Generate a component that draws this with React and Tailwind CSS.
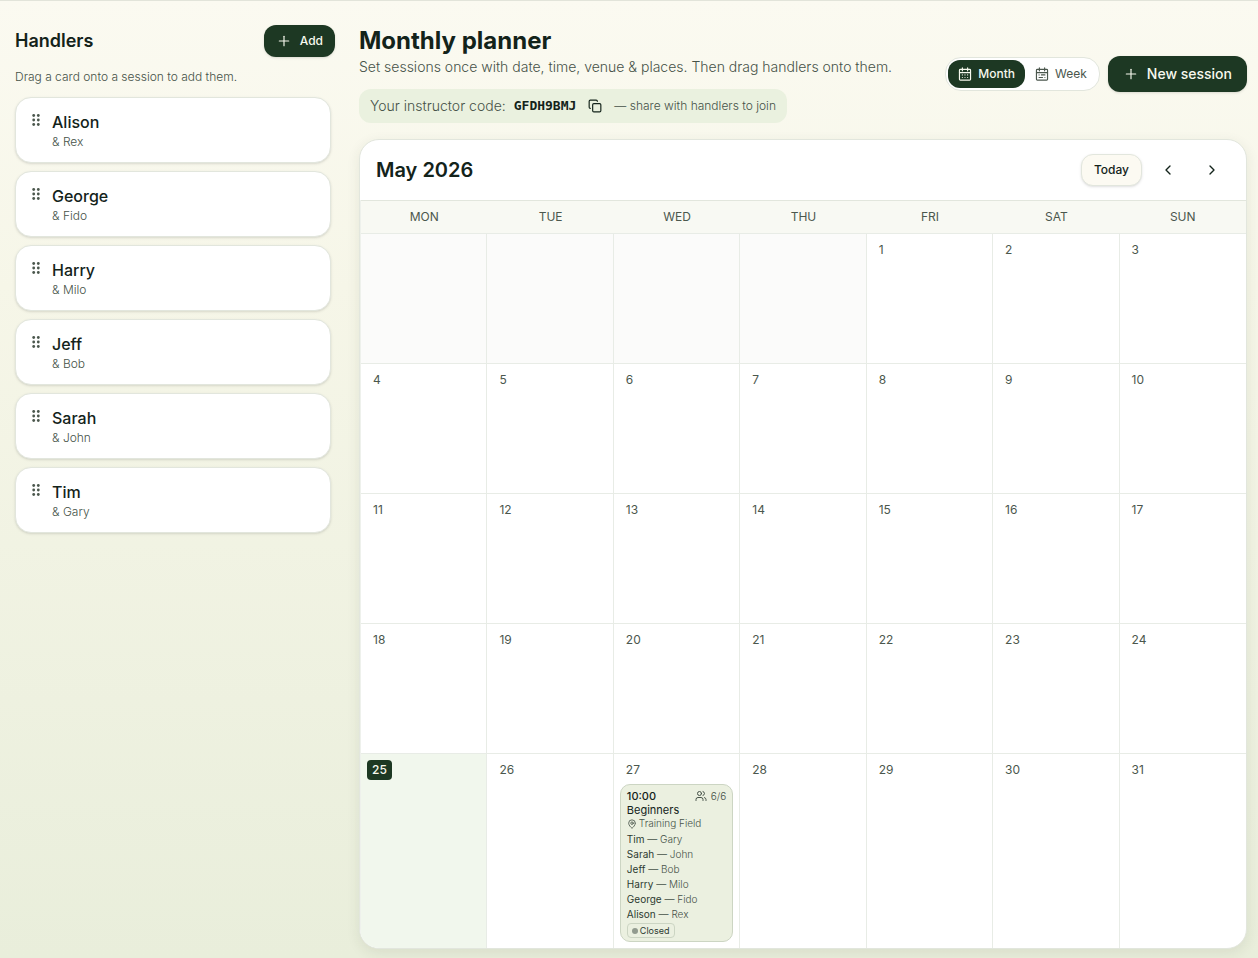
import { ChevronLeft, ChevronRight, Copy, MapPin, Plus, Users } from "lucide-react";

const handlers = [
  { name: "Alison", dog: "Rex" },
  { name: "George", dog: "Fido" },
  { name: "Harry", dog: "Milo" },
  { name: "Jeff", dog: "Bob" },
  { name: "Sarah", dog: "John" },
  { name: "Tim", dog: "Gary" },
];

const weekdays = ["MON", "TUE", "WED", "THU", "FRI", "SAT", "SUN"];

const weeks = [
  [null, null, null, null, 1, 2, 3],
  [4, 5, 6, 7, 8, 9, 10],
  [11, 12, 13, 14, 15, 16, 17],
  [18, 19, 20, 21, 22, 23, 24],
  [25, 26, 27, 28, 29, 30, 31],
];

const today = 25;

const sessions = {
  27: {
    time: "10:00",
    title: "Beginners",
    venue: "Training Field",
    places: "6/6",
    status: "Closed",
    attendees: [...handlers].reverse(),
  },
};

function GripDots() {
  return (
    <svg viewBox="0 0 8 12" className="mt-[7px] h-3 w-2 shrink-0 fill-[#4b574d]" aria-hidden="true">
      {[1.5, 6, 10.5].map((y) => (
        <g key={y}>
          <circle cx="1.7" cy={y} r="1.4" />
          <circle cx="6.3" cy={y} r="1.4" />
        </g>
      ))}
    </svg>
  );
}

function CalendarIcon({ children }) {
  return (
    <svg
      viewBox="0 0 24 24"
      className="size-[14px] fill-none stroke-current stroke-2"
      strokeLinecap="round"
      strokeLinejoin="round"
      aria-hidden="true"
    >
      <path d="M7.5 1.5v5M16.5 1.5v5M2.5 9.5h19" />
      <rect x="2.5" y="4" width="19" height="18.5" rx="1.5" />
      {children}
    </svg>
  );
}

function HandlerCard({ name, dog }) {
  return (
    <li className="flex h-[66px] cursor-grab gap-3 rounded-2xl border border-[#e2e6dd] bg-white px-4 pt-[9px] shadow-sm">
      <GripDots />
      <div>
        <p className="text-base leading-[30px] font-medium text-[#13231a]">{name}</p>
        <p className="text-xs leading-[10px] font-light text-[#465248]">&amp; {dog}</p>
      </div>
    </li>
  );
}

function SessionCard({ session }) {
  return (
    <article className="mt-1 rounded-[10px] border border-[#ccd5c3] bg-[#ebf0e0] px-[6px] pt-1 pb-[3px] text-[10px] font-light text-[#465248]">
      <div className="flex items-center justify-between leading-[14px]">
        <span className="text-[11px] font-medium text-[#13231a]">{session.time}</span>
        <span className="flex items-center gap-1">
          <Users size={12} />
          {session.places}
        </span>
      </div>
      <p className="text-[11px] leading-[14px] font-normal text-[#13231a]">{session.title}</p>
      <p className="flex items-center gap-[2px] leading-[13px]">
        <MapPin size={10} />
        {session.venue}
      </p>
      <ul className="mt-[2px] leading-[15px]">
        {session.attendees.map((a) => (
          <li key={a.name}>
            <span className="font-normal text-[#2d3b31]">{a.name}</span> — {a.dog}
          </li>
        ))}
      </ul>
      <div className="mt-px flex h-[15px] w-fit items-center gap-[2px] rounded border border-[#ccd5c3] px-1 text-[9px] font-normal text-[#2d3b31]">
        <span className="size-[6px] rounded-full bg-[#929b8f]" />
        {session.status}
      </div>
    </article>
  );
}

function DayCell({ day }) {
  if (day === null) {
    return <td className="border-r border-b border-[#e8ece6] bg-[#fbfbfa]" />;
  }
  const isToday = day === today;
  const session = sessions[day];
  return (
    <td
      className={`border-r border-b border-[#e8ece6] p-[6px] align-top last:border-r-0 ${isToday ? "bg-[#f1f7ed]" : ""}`}
    >
      <time
        className={`block h-5 w-fit rounded text-xs leading-5 ${isToday ? "bg-[#1d3823] px-[5px] font-medium text-[#f7f8ee]" : "px-[6px] text-[#4b574d]"}`}
      >
        {day}
      </time>
      {session && <SessionCard session={session} />}
    </td>
  );
}

export default function App() {
  return (
    <div className="min-h-screen border-t border-[#e2e4da] bg-linear-to-b from-[#fbfaf1] via-[#f6f6e8] via-30% to-[#e9eedb] font-['Inter',sans-serif] text-[#13231a]">
      <div className="flex gap-6 pt-6 pr-[11px] pb-[9px] pl-[15px]">
        <aside className="w-80 shrink-0">
          <div className="flex h-8 items-center justify-between">
            <h2 className="text-lg font-semibold">Handlers</h2>
            <button
              type="button"
              className="flex h-8 items-center gap-2 rounded-xl bg-[#1d3823] px-3 text-xs font-medium text-[#f7f8ee] shadow-sm"
            >
              <Plus size={16} strokeWidth={1.75} />
              Add
            </button>
          </div>
          <p className="mt-3 text-xs leading-4 font-light text-[#465248]">Drag a card onto a session to add them.</p>
          <ul className="mt-3 mr-1 flex flex-col gap-2">
            {handlers.map((h) => (
              <HandlerCard key={h.name} {...h} />
            ))}
          </ul>
        </aside>

        <main className="min-w-0 flex-1">
          <header className="flex items-center justify-between">
            <div>
              <h1 className="text-2xl leading-8 font-bold">Monthly planner</h1>
              <p className="text-sm leading-5 font-light text-[#465248]">
                Set sessions once with date, time, venue &amp; places. Then drag handlers onto them.
              </p>
              <div className="mt-3 flex h-[34px] w-fit items-center rounded-xl bg-[#eaf1df] px-[11px] text-sm font-light text-[#465248]">
                Your instructor code:
                <code className="ml-2 font-['DejaVu_Sans_Mono',monospace] text-[13px] font-bold text-[#13231a]">
                  GFDH9BMJ
                </code>
                <button type="button" aria-label="Copy instructor code" className="ml-3 text-[#13231a]">
                  <Copy size={14} />
                </button>
                <span className="ml-3 text-xs">— share with handlers to join</span>
              </div>
            </div>
            <div className="flex items-center gap-2">
              <div className="flex h-[34px] items-center rounded-2xl border border-[#e2e6dd] bg-white px-[2px] text-xs font-medium">
                <button
                  type="button"
                  aria-pressed="true"
                  className="flex h-7 items-center gap-[6px] rounded-xl bg-[#1d3823] px-[10px] text-[#f7f8ee]"
                >
                  <CalendarIcon>
                    <path d="M7.5 13.5h.01M12 13.5h.01M16.5 13.5h.01M7.5 18h.01M12 18h.01M16.5 18h.01" />
                  </CalendarIcon>
                  Month
                </button>
                <button
                  type="button"
                  aria-pressed="false"
                  className="flex h-7 items-center gap-[6px] rounded-xl px-[10px] font-normal text-[#4b574d]"
                >
                  <CalendarIcon>
                    <path d="M7 13.5h.01M11 13.5h6M7 18h6M17 18h.01" />
                  </CalendarIcon>
                  Week
                </button>
              </div>
              <button
                type="button"
                className="flex h-9 items-center gap-2 rounded-xl bg-[#1d3823] px-[15px] text-sm font-medium text-[#f7f8ee] shadow-sm"
              >
                <Plus size={16} strokeWidth={1.75} />
                New session
              </button>
            </div>
          </header>

          <section className="mt-4 overflow-hidden rounded-[20px] border border-[#e2e6dd] bg-white shadow-[0_4px_14px_rgba(40,60,30,0.09)]">
            <div className="flex h-[60px] items-center justify-between px-4">
              <h2 className="text-xl leading-6 font-semibold">May 2026</h2>
              <div className="flex items-center gap-2">
                <button
                  type="button"
                  className="h-8 rounded-xl border border-[#e2e6dd] bg-[#fcfaf2] px-3 text-xs font-medium shadow-sm"
                >
                  Today
                </button>
                <button type="button" aria-label="Previous month" className="grid h-8 w-9 place-items-center">
                  <ChevronLeft size={16} />
                </button>
                <button type="button" aria-label="Next month" className="grid h-8 w-9 place-items-center">
                  <ChevronRight size={16} />
                </button>
              </div>
            </div>
            <table className="w-full table-fixed border-separate border-spacing-0 border-l border-[#eef1ec]">
              <thead>
                <tr>
                  {weekdays.map((d) => (
                    <th
                      key={d}
                      scope="col"
                      className="h-[34px] border-y border-t-[#e2e6dd] border-b-[#e8ece6] bg-[#f8f9f3] text-xs font-normal text-[#4b574d]"
                    >
                      {d}
                    </th>
                  ))}
                </tr>
              </thead>
              <tbody className="[&>tr:last-child>td]:border-b-0">
                {weeks.map((week, i) => (
                  <tr key={i} className="h-[130px]">
                    {week.map((day, j) => (
                      <DayCell key={j} day={day} />
                    ))}
                  </tr>
                ))}
              </tbody>
            </table>
          </section>
        </main>
      </div>
    </div>
  );
}
